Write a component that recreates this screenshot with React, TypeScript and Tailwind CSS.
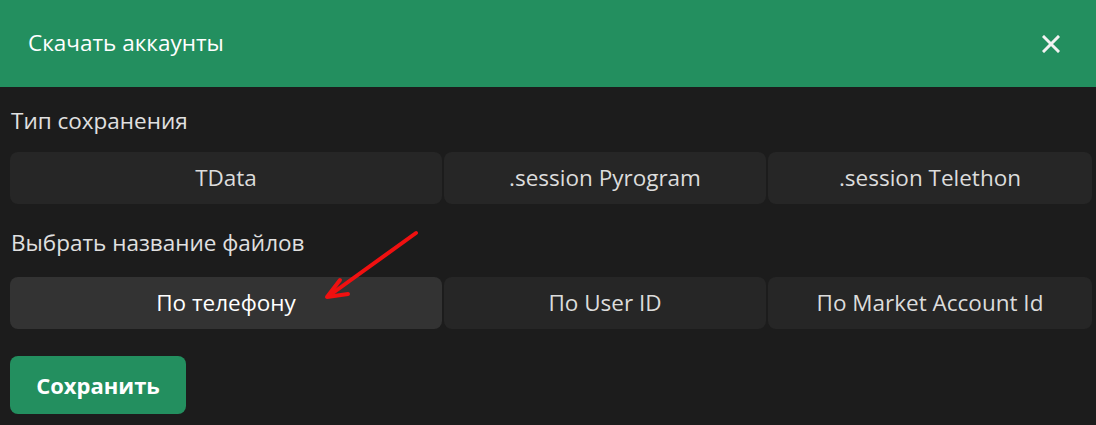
import React, { useState } from 'react';

const saveTypes = ['TData', '.session Pyrogram', '.session Telethon'];
const nameTypes = ['По телефону', 'По User ID', 'По Market Account Id'];

const App: React.FC = () => {
  const [saveType, setSaveType] = useState<string | null>(null);
  const [nameType, setNameType] = useState('По телефону');

  return (
    <div
      className="relative w-[1096px] h-[425px] bg-[#1c1c1c] text-[#e6e6e6] overflow-hidden"
      style={{ fontFamily: '"Open Sans", "Noto Sans", sans-serif' }}
    >
      {/* Header */}
      <div className="flex items-center justify-between h-[87px] bg-[#238f5f] pl-[28px] pr-[36px]">
        <h2 className="text-[22.5px] leading-[30px] pb-[2px] text-white">Скачать аккаунты</h2>
        <button className="text-white">
          <svg width="18" height="18" viewBox="0 0 18 18">
            <path d="M2 2 L16 16 M16 2 L2 16" stroke="#f2f2f2" strokeWidth="3" strokeLinecap="square" />
          </svg>
        </button>
      </div>

      {/* Body */}
      <div className="px-[10px]">
        <div className="pt-[20px] pl-[1px] text-[22.5px] leading-[28px] text-[#e0e0e0]">Тип сохранения</div>
        <div className="grid grid-cols-[432px_322px_324px] gap-[2px] mt-[17px]">
          {saveTypes.map((t) => (
            <button
              key={t}
              onClick={() => setSaveType(t)}
              className={`h-[52px] rounded-[8px] text-[22.5px] text-[#dcdcdc] ${saveType === t ? 'bg-[#333333]' : 'bg-[#262626]'}`}
            >
              {t}
            </button>
          ))}
        </div>

        <div className="pt-[25px] pl-[1px] text-[22.5px] leading-[28px] text-[#e0e0e0]">Выбрать название файлов</div>
        <div className="grid grid-cols-[432px_322px_324px] gap-[2px] mt-[20px]">
          {nameTypes.map((t) => (
            <button
              key={t}
              onClick={() => setNameType(t)}
              className={`h-[52px] rounded-[8px] text-[22.5px] text-[#dcdcdc] ${nameType === t ? 'bg-[#333333] text-white' : 'bg-[#262626]'}`}
            >
              {t}
            </button>
          ))}
        </div>

        {/* Save */}
        <button className="mt-[27px] w-[176px] h-[58px] rounded-[8px] bg-[#238f5f] text-white text-[22px] font-bold">
          Сохранить
        </button>
      </div>

      {/* red annotation arrow */}
      <svg className="absolute left-0 top-0 pointer-events-none" width="1096" height="425">
        <path d="M416 233 L330 295" stroke="#f01010" strokeWidth="4" strokeLinecap="round" />
        <path d="M340 280 L327 297 L348 294" stroke="#f01010" strokeWidth="4" fill="none" strokeLinecap="round" strokeLinejoin="round" />
      </svg>
    </div>
  );
};

export default App;
